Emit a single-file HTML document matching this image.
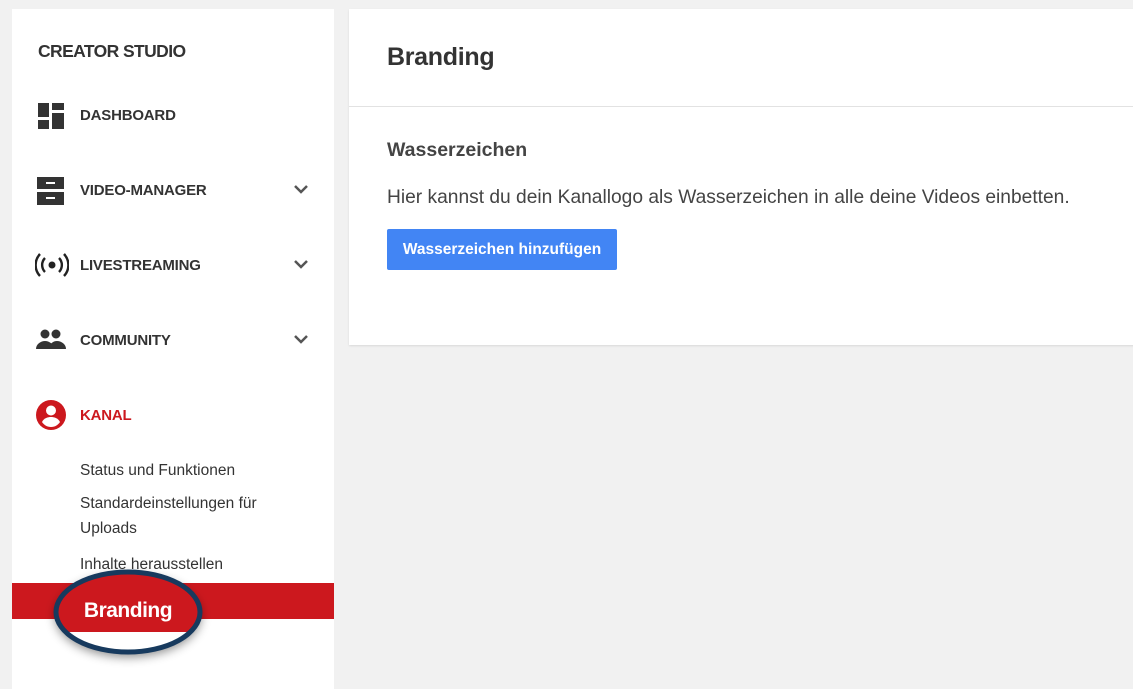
<!DOCTYPE html>
<html><head><meta charset="utf-8"><style>
*{margin:0;padding:0;box-sizing:border-box}
body{width:1133px;height:674px;background:#f1f1f1;font-family:"Liberation Sans",Arial,sans-serif;position:relative;overflow:hidden;color:#333}
.side{position:absolute;left:12px;top:9px;width:322px;height:680px;background:#fff}
.t{position:absolute;left:38px;top:41px;font-size:17.5px;font-weight:bold;letter-spacing:-0.6px;color:#333}
.item{position:absolute;left:80px;font-size:15px;font-weight:bold;color:#333;letter-spacing:-0.2px}
.ic{position:absolute;left:35px}
.chev{position:absolute;left:293px}
.sub{position:absolute;left:80px;font-size:15.5px;color:#333;line-height:25px}
.main{position:absolute;left:349px;top:9px;width:790px;height:336px;background:#fff;box-shadow:0 1px 2px rgba(0,0,0,.1)}
</style></head><body>
<div class="side"></div>
<div class="t">CREATOR STUDIO</div>

<svg style="position:absolute;left:38px;top:103px" width="26" height="26" viewBox="0 0 26 26"><rect x="0" y="0" width="11" height="14" fill="#333"/><rect x="14" y="0" width="12" height="7" fill="#333"/><rect x="0" y="17" width="11" height="9" fill="#333"/><rect x="14" y="10" width="12" height="16" fill="#333"/></svg>
<div class="item" style="top:107px">DASHBOARD</div>

<svg class="ic" style="top:176px" width="30" height="30" viewBox="0 0 30 30"><rect x="2" y="1" width="27" height="12" fill="#333"/><rect x="2" y="16" width="27" height="13" fill="#333"/><rect x="11" y="6" width="9" height="2" fill="#fff"/><rect x="11" y="21" width="9" height="2" fill="#fff"/></svg>
<div class="item" style="top:182px">VIDEO-MANAGER</div>
<svg class="chev" style="top:183px" width="16" height="12" viewBox="0 0 16 12"><path d="M2 3l6 6 6-6" stroke="#555" stroke-width="2.5" fill="none"/></svg>

<svg class="ic" style="top:253px" width="34" height="24" viewBox="0 0 34 24"><circle cx="17" cy="12" r="3.5" fill="#222"/><path d="M10 5a10 10 0 0 0 0 14M24 5a10 10 0 0 1 0 14" stroke="#222" stroke-width="2.4" fill="none"/><path d="M5 1a16 16 0 0 0 0 22M29 1a16 16 0 0 1 0 22" stroke="#222" stroke-width="2.4" fill="none"/></svg>
<div class="item" style="top:257px">LIVESTREAMING</div>
<svg class="chev" style="top:258px" width="16" height="12" viewBox="0 0 16 12"><path d="M2 3l6 6 6-6" stroke="#555" stroke-width="2.5" fill="none"/></svg>

<svg class="ic" style="top:327px" width="32" height="26" viewBox="0 0 32 26"><circle cx="10" cy="7" r="4.5" fill="#333"/><circle cx="21" cy="7" r="4.5" fill="#333"/><path d="M1 22c0-5 5-8 9-8s9 3 9 8z" fill="#333"/><path d="M14 22c0-5 4-8 8-8s9 3 9 8z" fill="#333"/></svg>
<div class="item" style="top:332px">COMMUNITY</div>
<svg class="chev" style="top:333px" width="16" height="12" viewBox="0 0 16 12"><path d="M2 3l6 6 6-6" stroke="#555" stroke-width="2.5" fill="none"/></svg>

<svg class="ic" style="top:399px" width="32" height="32" viewBox="0 0 32 32"><circle cx="16" cy="16" r="15" fill="#cc181e"/><circle cx="16" cy="11.5" r="5" fill="#fff"/><path d="M7 23c2-4 6-5 9-5s7 1 9 5c-2 3-5 5-9 5s-7-2-9-5z" fill="#fff"/></svg>
<div class="item" style="top:407px;color:#cc181e">KANAL</div>

<div class="sub" style="top:458px">Status und Funktionen</div>
<div class="sub" style="top:491px">Standardeinstellungen für<br>Uploads</div>
<div class="sub" style="top:552px">Inhalte herausstellen</div>
<div style="position:absolute;left:12px;top:583px;width:322px;height:36px;background:#cc181e"></div>

<svg style="position:absolute;left:40px;top:560px" width="180" height="110" viewBox="0 0 180 110">
<defs><filter id="s" x="-30%" y="-30%" width="160%" height="160%"><feDropShadow dx="0" dy="4" stdDeviation="5" flood-opacity="0.45"/></filter>
<clipPath id="c"><ellipse cx="88" cy="52" rx="71" ry="39"/></clipPath></defs>
<ellipse cx="88" cy="52" rx="73" ry="41" fill="#fff" filter="url(#s)"/>
<g clip-path="url(#c)"><rect x="0" y="12" width="180" height="60" fill="#cc181e"/></g>
<text x="88" y="57" text-anchor="middle" font-family="Liberation Sans,Arial,sans-serif" font-weight="bold" font-size="21" letter-spacing="-0.5" fill="#fff">Branding</text>
<ellipse cx="88" cy="52" rx="72" ry="40" fill="none" stroke="#173a5e" stroke-width="5"/>
</svg>

<div class="main">
<div style="position:absolute;left:38px;top:34px;font-size:25px;font-weight:bold;letter-spacing:-0.3px;color:#333">Branding</div>
<div style="position:absolute;left:0;top:97px;width:100%;height:1px;background:#e2e2e2"></div>
<div style="position:absolute;left:38px;top:130px;font-size:19.5px;font-weight:bold;color:#444">Wasserzeichen</div>
<div style="position:absolute;left:38px;top:178px;font-size:19.2px;color:#444">Hier kannst du dein Kanallogo als Wasserzeichen in alle deine Videos einbetten.</div>
<div style="position:absolute;left:38px;top:220px;width:230px;height:41px;background:#4285f4;border-radius:2px;color:#fff;font-weight:bold;font-size:15.5px;line-height:41px;text-align:center">Wasserzeichen hinzufügen</div>
</div>
</body></html>
